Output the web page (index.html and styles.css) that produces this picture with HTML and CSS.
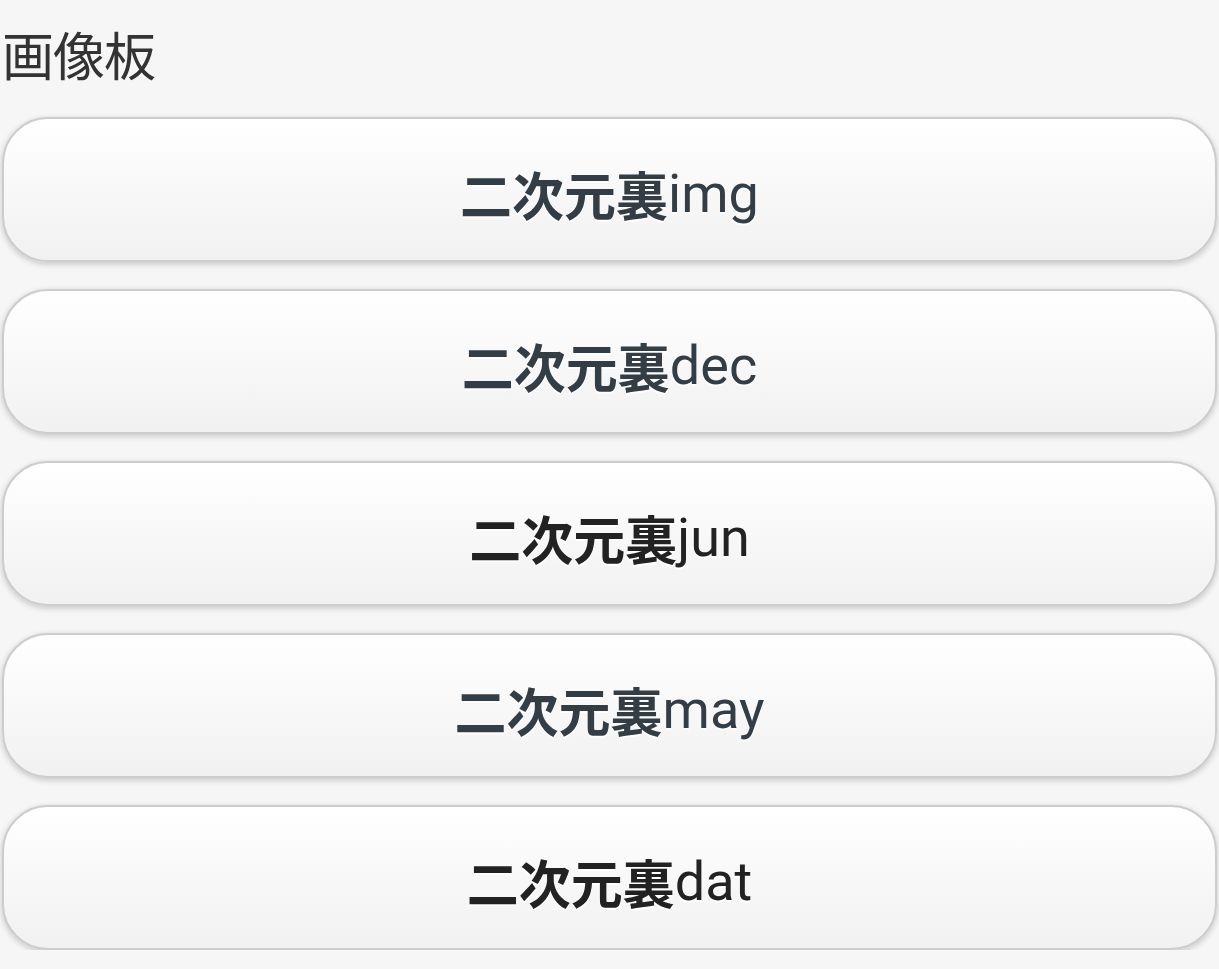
FILE: index.html
```html
<!DOCTYPE html>
<html lang="ja">
<head>
<meta charset="utf-8">
<link rel="stylesheet" href="styles.css">
</head>
<body>
<div class="page">
  <h1 class="title">画像板</h1>
  <ul class="list">
    <li><a class="btn slate" href="#"><span class="cjk">二次元裏</span><span class="lat">img</span></a></li>
    <li><a class="btn slate" href="#"><span class="cjk">二次元裏</span><span class="lat">dec</span></a></li>
    <li><a class="btn dark" href="#"><span class="cjk">二次元裏</span><span class="lat">jun</span></a></li>
    <li><a class="btn slate" href="#"><span class="cjk">二次元裏</span><span class="lat">may</span></a></li>
    <li><a class="btn dark" href="#"><span class="cjk">二次元裏</span><span class="lat">dat</span></a></li>
  </ul>
</div>
</body>
</html>
```
FILE: styles.css
```css
html, body {
  margin: 0;
  padding: 0;
  background: #f6f6f6;
}
.page {
  font-family: Roboto, "Noto Sans CJK JP", sans-serif;
  padding: 0 2px;
}
.title {
  margin: 0;
  padding-top: 23px;
  padding-left: 0;
  font-size: 52px;
  line-height: 62px;
  font-weight: 400;
  color: #333;
  font-family: "Noto Sans CJK JP", sans-serif;
  letter-spacing: -1px;
}
.list {
  list-style: none;
  margin: 32px 0 0;
  padding: 0;
  display: flex;
  flex-direction: column;
  gap: 27px;
}
.btn {
  display: flex;
  align-items: center;
  justify-content: center;
  box-sizing: border-box;
  height: 145px;
  padding-top: 8px;
  border: 2px solid #cdcdcd;
  border-radius: 46px;
  background: linear-gradient(#ffffff, #f1f1f1);
  box-shadow: 0 2px 6px rgba(0, 0, 0, 0.2);
  text-decoration: none;
  font-size: 52px;
  line-height: 60px;
  text-shadow: 0 2px 0 #fff;
}
.cjk {
  font-family: "Noto Sans CJK JP", sans-serif;
  font-weight: 700;
  font-size: 52px;
}
.lat {
  font-family: Roboto, sans-serif;
  font-weight: 400;
  font-size: 54px;
}
.slate { color: #333d45; }
.dark { color: #222; }
```
